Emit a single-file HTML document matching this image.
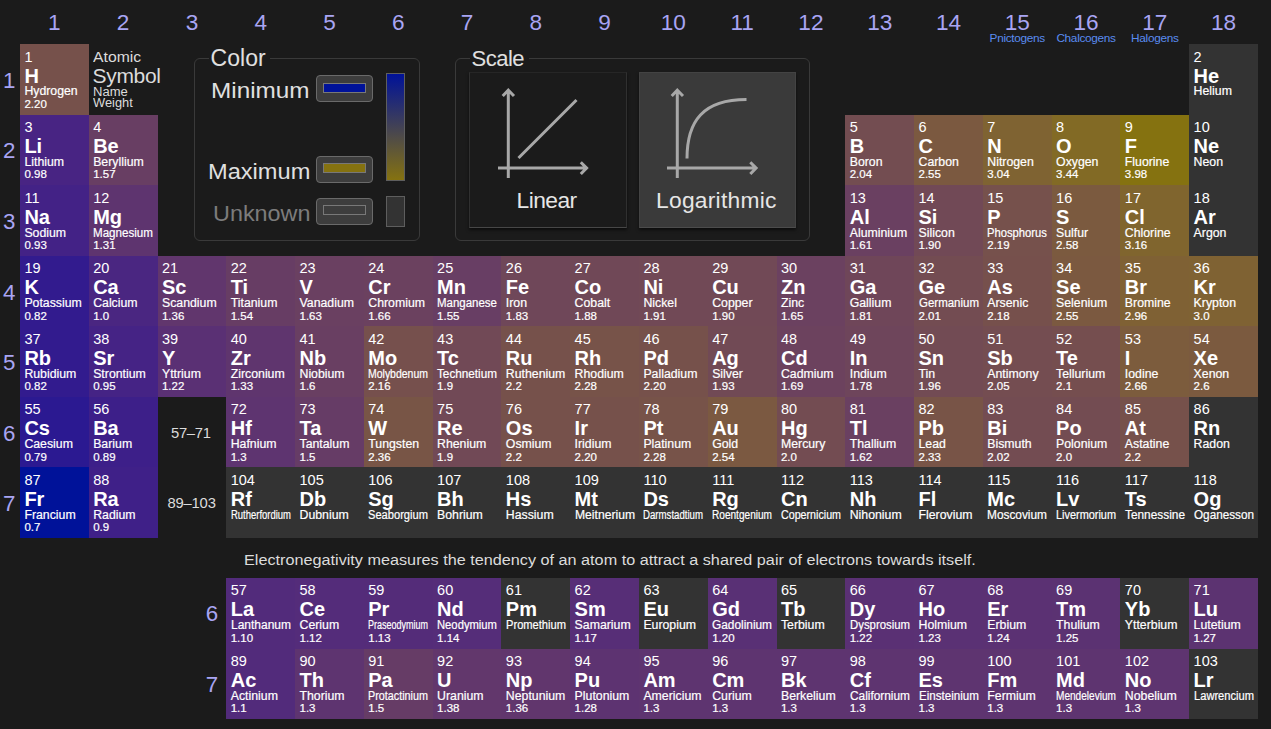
<!DOCTYPE html>
<html><head><meta charset="utf-8"><style>
*{margin:0;padding:0;box-sizing:border-box}
html,body{width:1271px;height:729px;overflow:hidden;background:#1b1b1b;font-family:"Liberation Sans",sans-serif;color:#fff}
.a{position:absolute;white-space:nowrap}
.c{position:absolute;overflow:hidden}
.n{position:absolute;left:5px;font-size:14.5px;line-height:14.5px}
.s{position:absolute;left:5px;font-size:20px;line-height:20px;font-weight:bold}
.m{position:absolute;left:5px;font-size:12.3px;line-height:12.3px;transform-origin:0 0;-webkit-text-stroke:0.2px #fff}
.w{position:absolute;left:5px;font-size:11.5px;line-height:11.5px;-webkit-text-stroke:0.2px #fff}
.gh{position:absolute;font-size:22.6px;line-height:22.6px;color:#a9a5f3;text-align:center}
.rh{position:absolute;font-size:22.3px;line-height:22.3px;color:#a9a5f3;text-align:center}
.gl{position:absolute;font-size:11.8px;line-height:11.8px;letter-spacing:-0.3px;color:#5a8cf0;text-align:center}
</style></head>
<body>
<div class="c" style="left:20px;top:44px;width:69px;height:71px;background:#76514b"><div class="n" style="left:4.40px;top:6px">1</div><div class="s" style="left:4.40px;top:22px">H</div><div class="m" style="left:4.40px;top:41px">Hydrogen</div><div class="w" style="left:4.40px;top:55px">2.20</div></div>
<div class="c" style="left:1189px;top:44px;width:69px;height:71px;background:#333333"><div class="n" style="left:4.62px;top:6px">2</div><div class="s" style="left:4.62px;top:22px">He</div><div class="m" style="left:4.62px;top:41px">Helium</div></div>
<div class="c" style="left:20px;top:115px;width:69px;height:70px;background:#482483"><div class="n" style="left:4.40px;top:5px">3</div><div class="s" style="left:4.40px;top:21px">Li</div><div class="m" style="left:4.40px;top:41px">Lithium</div><div class="w" style="left:4.40px;top:54px">0.98</div></div>
<div class="c" style="left:89px;top:115px;width:69px;height:70px;background:#683e63"><div class="n" style="left:4.18px;top:5px">4</div><div class="s" style="left:4.18px;top:21px">Be</div><div class="m" style="left:4.18px;top:41px">Beryllium</div><div class="w" style="left:4.18px;top:54px">1.57</div></div>
<div class="c" style="left:845px;top:115px;width:69px;height:70px;background:#734d51"><div class="n" style="left:4.73px;top:5px">5</div><div class="s" style="left:4.73px;top:21px">B</div><div class="m" style="left:4.73px;top:41px">Boron</div><div class="w" style="left:4.73px;top:54px">2.04</div></div>
<div class="c" style="left:914px;top:115px;width:69px;height:70px;background:#7b5940"><div class="n" style="left:4.51px;top:5px">6</div><div class="s" style="left:4.51px;top:21px">C</div><div class="m" style="left:4.51px;top:41px">Carbon</div><div class="w" style="left:4.51px;top:54px">2.55</div></div>
<div class="c" style="left:983px;top:115px;width:69px;height:70px;background:#7f6332"><div class="n" style="left:4.29px;top:5px">7</div><div class="s" style="left:4.29px;top:21px">N</div><div class="m" style="left:4.29px;top:41px">Nitrogen</div><div class="w" style="left:4.29px;top:54px">3.04</div></div>
<div class="c" style="left:1052px;top:115px;width:68px;height:70px;background:#826a25"><div class="n" style="left:4.07px;top:5px">8</div><div class="s" style="left:4.07px;top:21px">O</div><div class="m" style="left:4.07px;top:41px">Oxygen</div><div class="w" style="left:4.07px;top:54px">3.44</div></div>
<div class="c" style="left:1120px;top:115px;width:69px;height:70px;background:#857210"><div class="n" style="left:4.84px;top:5px">9</div><div class="s" style="left:4.84px;top:21px">F</div><div class="m" style="left:4.84px;top:41px">Fluorine</div><div class="w" style="left:4.84px;top:54px">3.98</div></div>
<div class="c" style="left:1189px;top:115px;width:69px;height:70px;background:#333333"><div class="n" style="left:4.62px;top:5px">10</div><div class="s" style="left:4.62px;top:21px">Ne</div><div class="m" style="left:4.62px;top:41px">Neon</div></div>
<div class="c" style="left:20px;top:185px;width:69px;height:71px;background:#432286"><div class="n" style="left:4.40px;top:6px">11</div><div class="s" style="left:4.40px;top:22px">Na</div><div class="m" style="left:4.40px;top:42px">Sodium</div><div class="w" style="left:4.40px;top:55px">0.93</div></div>
<div class="c" style="left:89px;top:185px;width:69px;height:71px;background:#5e346f"><div class="n" style="left:4.18px;top:6px">12</div><div class="s" style="left:4.18px;top:22px">Mg</div><div class="m" style="left:4.18px;top:42px;transform:scaleX(0.9437)">Magnesium</div><div class="w" style="left:4.18px;top:55px">1.31</div></div>
<div class="c" style="left:845px;top:185px;width:69px;height:71px;background:#6a4061"><div class="n" style="left:4.73px;top:6px">13</div><div class="s" style="left:4.73px;top:22px">Al</div><div class="m" style="left:4.73px;top:42px">Aluminium</div><div class="w" style="left:4.73px;top:55px">1.61</div></div>
<div class="c" style="left:914px;top:185px;width:69px;height:71px;background:#714956"><div class="n" style="left:4.51px;top:6px">14</div><div class="s" style="left:4.51px;top:22px">Si</div><div class="m" style="left:4.51px;top:42px">Silicon</div><div class="w" style="left:4.51px;top:55px">1.90</div></div>
<div class="c" style="left:983px;top:185px;width:69px;height:71px;background:#76514c"><div class="n" style="left:4.29px;top:6px">15</div><div class="s" style="left:4.29px;top:22px">P</div><div class="m" style="left:4.29px;top:42px;transform:scaleX(0.9140)">Phosphorus</div><div class="w" style="left:4.29px;top:55px">2.19</div></div>
<div class="c" style="left:1052px;top:185px;width:68px;height:71px;background:#7b5a3f"><div class="n" style="left:4.07px;top:6px">16</div><div class="s" style="left:4.07px;top:22px">S</div><div class="m" style="left:4.07px;top:42px">Sulfur</div><div class="w" style="left:4.07px;top:55px">2.58</div></div>
<div class="c" style="left:1120px;top:185px;width:69px;height:71px;background:#80652e"><div class="n" style="left:4.84px;top:6px">17</div><div class="s" style="left:4.84px;top:22px">Cl</div><div class="m" style="left:4.84px;top:42px">Chlorine</div><div class="w" style="left:4.84px;top:55px">3.16</div></div>
<div class="c" style="left:1189px;top:185px;width:69px;height:71px;background:#333333"><div class="n" style="left:4.62px;top:6px">18</div><div class="s" style="left:4.62px;top:22px">Ar</div><div class="m" style="left:4.62px;top:42px">Argon</div></div>
<div class="c" style="left:20px;top:256px;width:69px;height:70px;background:#321b8e"><div class="n" style="left:4.40px;top:5px">19</div><div class="s" style="left:4.40px;top:21px">K</div><div class="m" style="left:4.40px;top:41px">Potassium</div><div class="w" style="left:4.40px;top:55px">0.82</div></div>
<div class="c" style="left:89px;top:256px;width:69px;height:70px;background:#4a2681"><div class="n" style="left:4.18px;top:5px">20</div><div class="s" style="left:4.18px;top:21px">Ca</div><div class="m" style="left:4.18px;top:41px">Calcium</div><div class="w" style="left:4.18px;top:55px">1.0</div></div>
<div class="c" style="left:158px;top:256px;width:68px;height:70px;background:#61366d"><div class="n" style="left:3.96px;top:5px">21</div><div class="s" style="left:3.96px;top:21px">Sc</div><div class="m" style="left:3.96px;top:41px">Scandium</div><div class="w" style="left:3.96px;top:55px">1.36</div></div>
<div class="c" style="left:226px;top:256px;width:69px;height:70px;background:#673d64"><div class="n" style="left:4.73px;top:5px">22</div><div class="s" style="left:4.73px;top:21px">Ti</div><div class="m" style="left:4.73px;top:41px">Titanium</div><div class="w" style="left:4.73px;top:55px">1.54</div></div>
<div class="c" style="left:295px;top:256px;width:69px;height:70px;background:#6a4061"><div class="n" style="left:4.51px;top:5px">23</div><div class="s" style="left:4.51px;top:21px">V</div><div class="m" style="left:4.51px;top:41px">Vanadium</div><div class="w" style="left:4.51px;top:55px">1.63</div></div>
<div class="c" style="left:364px;top:256px;width:69px;height:70px;background:#6b415f"><div class="n" style="left:4.29px;top:5px">24</div><div class="s" style="left:4.29px;top:21px">Cr</div><div class="m" style="left:4.29px;top:41px">Chromium</div><div class="w" style="left:4.29px;top:55px">1.66</div></div>
<div class="c" style="left:433px;top:256px;width:68px;height:70px;background:#683e64"><div class="n" style="left:4.07px;top:5px">25</div><div class="s" style="left:4.07px;top:21px">Mn</div><div class="m" style="left:4.07px;top:41px;transform:scaleX(0.9334)">Manganese</div><div class="w" style="left:4.07px;top:55px">1.55</div></div>
<div class="c" style="left:501px;top:256px;width:69px;height:70px;background:#6f4759"><div class="n" style="left:4.84px;top:5px">26</div><div class="s" style="left:4.84px;top:21px">Fe</div><div class="m" style="left:4.84px;top:41px">Iron</div><div class="w" style="left:4.84px;top:55px">1.83</div></div>
<div class="c" style="left:570px;top:256px;width:69px;height:70px;background:#704857"><div class="n" style="left:4.62px;top:5px">27</div><div class="s" style="left:4.62px;top:21px">Co</div><div class="m" style="left:4.62px;top:41px">Cobalt</div><div class="w" style="left:4.62px;top:55px">1.88</div></div>
<div class="c" style="left:639px;top:256px;width:69px;height:70px;background:#714956"><div class="n" style="left:4.40px;top:5px">28</div><div class="s" style="left:4.40px;top:21px">Ni</div><div class="m" style="left:4.40px;top:41px">Nickel</div><div class="w" style="left:4.40px;top:55px">1.91</div></div>
<div class="c" style="left:708px;top:256px;width:69px;height:70px;background:#714956"><div class="n" style="left:4.18px;top:5px">29</div><div class="s" style="left:4.18px;top:21px">Cu</div><div class="m" style="left:4.18px;top:41px">Copper</div><div class="w" style="left:4.18px;top:55px">1.90</div></div>
<div class="c" style="left:777px;top:256px;width:68px;height:70px;background:#6b4160"><div class="n" style="left:3.96px;top:5px">30</div><div class="s" style="left:3.96px;top:21px">Zn</div><div class="m" style="left:3.96px;top:41px">Zinc</div><div class="w" style="left:3.96px;top:55px">1.65</div></div>
<div class="c" style="left:845px;top:256px;width:69px;height:70px;background:#6f4659"><div class="n" style="left:4.73px;top:5px">31</div><div class="s" style="left:4.73px;top:21px">Ga</div><div class="m" style="left:4.73px;top:41px">Gallium</div><div class="w" style="left:4.73px;top:55px">1.81</div></div>
<div class="c" style="left:914px;top:256px;width:69px;height:70px;background:#734c52"><div class="n" style="left:4.51px;top:5px">32</div><div class="s" style="left:4.51px;top:21px">Ge</div><div class="m" style="left:4.51px;top:41px;transform:scaleX(0.9338)">Germanium</div><div class="w" style="left:4.51px;top:55px">2.01</div></div>
<div class="c" style="left:983px;top:256px;width:69px;height:70px;background:#76504c"><div class="n" style="left:4.29px;top:5px">33</div><div class="s" style="left:4.29px;top:21px">As</div><div class="m" style="left:4.29px;top:41px">Arsenic</div><div class="w" style="left:4.29px;top:55px">2.18</div></div>
<div class="c" style="left:1052px;top:256px;width:68px;height:70px;background:#7b5940"><div class="n" style="left:4.07px;top:5px">34</div><div class="s" style="left:4.07px;top:21px">Se</div><div class="m" style="left:4.07px;top:41px">Selenium</div><div class="w" style="left:4.07px;top:55px">2.55</div></div>
<div class="c" style="left:1120px;top:256px;width:69px;height:70px;background:#7f6134"><div class="n" style="left:4.84px;top:5px">35</div><div class="s" style="left:4.84px;top:21px">Br</div><div class="m" style="left:4.84px;top:41px">Bromine</div><div class="w" style="left:4.84px;top:55px">2.96</div></div>
<div class="c" style="left:1189px;top:256px;width:69px;height:70px;background:#7f6233"><div class="n" style="left:4.62px;top:5px">36</div><div class="s" style="left:4.62px;top:21px">Kr</div><div class="m" style="left:4.62px;top:41px">Krypton</div><div class="w" style="left:4.62px;top:55px">3.0</div></div>
<div class="c" style="left:20px;top:326px;width:69px;height:71px;background:#321b8e"><div class="n" style="left:4.40px;top:6px">37</div><div class="s" style="left:4.40px;top:22px">Rb</div><div class="m" style="left:4.40px;top:42px">Rubidium</div><div class="w" style="left:4.40px;top:55px">0.82</div></div>
<div class="c" style="left:89px;top:326px;width:69px;height:71px;background:#452385"><div class="n" style="left:4.18px;top:6px">38</div><div class="s" style="left:4.18px;top:22px">Sr</div><div class="m" style="left:4.18px;top:42px">Strontium</div><div class="w" style="left:4.18px;top:55px">0.95</div></div>
<div class="c" style="left:158px;top:326px;width:68px;height:71px;background:#5a3074"><div class="n" style="left:3.96px;top:6px">39</div><div class="s" style="left:3.96px;top:22px">Y</div><div class="m" style="left:3.96px;top:42px">Yttrium</div><div class="w" style="left:3.96px;top:55px">1.22</div></div>
<div class="c" style="left:226px;top:326px;width:69px;height:71px;background:#5f356e"><div class="n" style="left:4.73px;top:6px">40</div><div class="s" style="left:4.73px;top:22px">Zr</div><div class="m" style="left:4.73px;top:42px">Zirconium</div><div class="w" style="left:4.73px;top:55px">1.33</div></div>
<div class="c" style="left:295px;top:326px;width:69px;height:71px;background:#693f62"><div class="n" style="left:4.51px;top:6px">41</div><div class="s" style="left:4.51px;top:22px">Nb</div><div class="m" style="left:4.51px;top:42px">Niobium</div><div class="w" style="left:4.51px;top:55px">1.6</div></div>
<div class="c" style="left:364px;top:326px;width:69px;height:71px;background:#76504d"><div class="n" style="left:4.29px;top:6px">42</div><div class="s" style="left:4.29px;top:22px">Mo</div><div class="m" style="left:4.29px;top:42px;transform:scaleX(0.8520)">Molybdenum</div><div class="w" style="left:4.29px;top:55px">2.16</div></div>
<div class="c" style="left:433px;top:326px;width:68px;height:71px;background:#714956"><div class="n" style="left:4.07px;top:6px">43</div><div class="s" style="left:4.07px;top:22px">Tc</div><div class="m" style="left:4.07px;top:42px;transform:scaleX(0.9539)">Technetium</div><div class="w" style="left:4.07px;top:55px">1.9</div></div>
<div class="c" style="left:501px;top:326px;width:69px;height:71px;background:#76514b"><div class="n" style="left:4.84px;top:6px">44</div><div class="s" style="left:4.84px;top:22px">Ru</div><div class="m" style="left:4.84px;top:42px">Ruthenium</div><div class="w" style="left:4.84px;top:55px">2.2</div></div>
<div class="c" style="left:570px;top:326px;width:69px;height:71px;background:#775349"><div class="n" style="left:4.62px;top:6px">45</div><div class="s" style="left:4.62px;top:22px">Rh</div><div class="m" style="left:4.62px;top:42px">Rhodium</div><div class="w" style="left:4.62px;top:55px">2.28</div></div>
<div class="c" style="left:639px;top:326px;width:69px;height:71px;background:#76514b"><div class="n" style="left:4.40px;top:6px">46</div><div class="s" style="left:4.40px;top:22px">Pd</div><div class="m" style="left:4.40px;top:42px">Palladium</div><div class="w" style="left:4.40px;top:55px">2.20</div></div>
<div class="c" style="left:708px;top:326px;width:69px;height:71px;background:#714a55"><div class="n" style="left:4.18px;top:6px">47</div><div class="s" style="left:4.18px;top:22px">Ag</div><div class="m" style="left:4.18px;top:42px">Silver</div><div class="w" style="left:4.18px;top:55px">1.93</div></div>
<div class="c" style="left:777px;top:326px;width:68px;height:71px;background:#6c425e"><div class="n" style="left:3.96px;top:6px">48</div><div class="s" style="left:3.96px;top:22px">Cd</div><div class="m" style="left:3.96px;top:42px">Cadmium</div><div class="w" style="left:3.96px;top:55px">1.69</div></div>
<div class="c" style="left:845px;top:326px;width:69px;height:71px;background:#6e455b"><div class="n" style="left:4.73px;top:6px">49</div><div class="s" style="left:4.73px;top:22px">In</div><div class="m" style="left:4.73px;top:42px">Indium</div><div class="w" style="left:4.73px;top:55px">1.78</div></div>
<div class="c" style="left:914px;top:326px;width:69px;height:71px;background:#724b54"><div class="n" style="left:4.51px;top:6px">50</div><div class="s" style="left:4.51px;top:22px">Sn</div><div class="m" style="left:4.51px;top:42px">Tin</div><div class="w" style="left:4.51px;top:55px">1.96</div></div>
<div class="c" style="left:983px;top:326px;width:69px;height:71px;background:#744d51"><div class="n" style="left:4.29px;top:6px">51</div><div class="s" style="left:4.29px;top:22px">Sb</div><div class="m" style="left:4.29px;top:42px">Antimony</div><div class="w" style="left:4.29px;top:55px">2.05</div></div>
<div class="c" style="left:1052px;top:326px;width:68px;height:71px;background:#754e4f"><div class="n" style="left:4.07px;top:6px">52</div><div class="s" style="left:4.07px;top:22px">Te</div><div class="m" style="left:4.07px;top:42px">Tellurium</div><div class="w" style="left:4.07px;top:55px">2.1</div></div>
<div class="c" style="left:1120px;top:326px;width:69px;height:71px;background:#7c5c3d"><div class="n" style="left:4.84px;top:6px">53</div><div class="s" style="left:4.84px;top:22px">I</div><div class="m" style="left:4.84px;top:42px">Iodine</div><div class="w" style="left:4.84px;top:55px">2.66</div></div>
<div class="c" style="left:1189px;top:326px;width:69px;height:71px;background:#7b5a3f"><div class="n" style="left:4.62px;top:6px">54</div><div class="s" style="left:4.62px;top:22px">Xe</div><div class="m" style="left:4.62px;top:42px">Xenon</div><div class="w" style="left:4.62px;top:55px">2.6</div></div>
<div class="c" style="left:20px;top:397px;width:69px;height:70px;background:#2b1991"><div class="n" style="left:4.40px;top:5px">55</div><div class="s" style="left:4.40px;top:21px">Cs</div><div class="m" style="left:4.40px;top:41px">Caesium</div><div class="w" style="left:4.40px;top:55px">0.79</div></div>
<div class="c" style="left:89px;top:397px;width:69px;height:70px;background:#3d1f89"><div class="n" style="left:4.18px;top:5px">56</div><div class="s" style="left:4.18px;top:21px">Ba</div><div class="m" style="left:4.18px;top:41px">Barium</div><div class="w" style="left:4.18px;top:55px">0.89</div></div>
<div class="c" style="left:226px;top:397px;width:69px;height:70px;background:#5e3470"><div class="n" style="left:4.73px;top:5px">72</div><div class="s" style="left:4.73px;top:21px">Hf</div><div class="m" style="left:4.73px;top:41px">Hafnium</div><div class="w" style="left:4.73px;top:55px">1.3</div></div>
<div class="c" style="left:295px;top:397px;width:69px;height:70px;background:#663c66"><div class="n" style="left:4.51px;top:5px">73</div><div class="s" style="left:4.51px;top:21px">Ta</div><div class="m" style="left:4.51px;top:41px">Tantalum</div><div class="w" style="left:4.51px;top:55px">1.5</div></div>
<div class="c" style="left:364px;top:397px;width:69px;height:70px;background:#785546"><div class="n" style="left:4.29px;top:5px">74</div><div class="s" style="left:4.29px;top:21px">W</div><div class="m" style="left:4.29px;top:41px">Tungsten</div><div class="w" style="left:4.29px;top:55px">2.36</div></div>
<div class="c" style="left:433px;top:397px;width:68px;height:70px;background:#714956"><div class="n" style="left:4.07px;top:5px">75</div><div class="s" style="left:4.07px;top:21px">Re</div><div class="m" style="left:4.07px;top:41px">Rhenium</div><div class="w" style="left:4.07px;top:55px">1.9</div></div>
<div class="c" style="left:501px;top:397px;width:69px;height:70px;background:#76514b"><div class="n" style="left:4.84px;top:5px">76</div><div class="s" style="left:4.84px;top:21px">Os</div><div class="m" style="left:4.84px;top:41px">Osmium</div><div class="w" style="left:4.84px;top:55px">2.2</div></div>
<div class="c" style="left:570px;top:397px;width:69px;height:70px;background:#76514b"><div class="n" style="left:4.62px;top:5px">77</div><div class="s" style="left:4.62px;top:21px">Ir</div><div class="m" style="left:4.62px;top:41px">Iridium</div><div class="w" style="left:4.62px;top:55px">2.20</div></div>
<div class="c" style="left:639px;top:397px;width:69px;height:70px;background:#775349"><div class="n" style="left:4.40px;top:5px">78</div><div class="s" style="left:4.40px;top:21px">Pt</div><div class="m" style="left:4.40px;top:41px">Platinum</div><div class="w" style="left:4.40px;top:55px">2.28</div></div>
<div class="c" style="left:708px;top:397px;width:69px;height:70px;background:#7b5941"><div class="n" style="left:4.18px;top:5px">79</div><div class="s" style="left:4.18px;top:21px">Au</div><div class="m" style="left:4.18px;top:41px">Gold</div><div class="w" style="left:4.18px;top:55px">2.54</div></div>
<div class="c" style="left:777px;top:397px;width:68px;height:70px;background:#734c52"><div class="n" style="left:3.96px;top:5px">80</div><div class="s" style="left:3.96px;top:21px">Hg</div><div class="m" style="left:3.96px;top:41px">Mercury</div><div class="w" style="left:3.96px;top:55px">2.0</div></div>
<div class="c" style="left:845px;top:397px;width:69px;height:70px;background:#6a4061"><div class="n" style="left:4.73px;top:5px">81</div><div class="s" style="left:4.73px;top:21px">Tl</div><div class="m" style="left:4.73px;top:41px">Thallium</div><div class="w" style="left:4.73px;top:55px">1.62</div></div>
<div class="c" style="left:914px;top:397px;width:69px;height:70px;background:#785447"><div class="n" style="left:4.51px;top:5px">82</div><div class="s" style="left:4.51px;top:21px">Pb</div><div class="m" style="left:4.51px;top:41px">Lead</div><div class="w" style="left:4.51px;top:55px">2.33</div></div>
<div class="c" style="left:983px;top:397px;width:69px;height:70px;background:#734c52"><div class="n" style="left:4.29px;top:5px">83</div><div class="s" style="left:4.29px;top:21px">Bi</div><div class="m" style="left:4.29px;top:41px">Bismuth</div><div class="w" style="left:4.29px;top:55px">2.02</div></div>
<div class="c" style="left:1052px;top:397px;width:68px;height:70px;background:#734c52"><div class="n" style="left:4.07px;top:5px">84</div><div class="s" style="left:4.07px;top:21px">Po</div><div class="m" style="left:4.07px;top:41px">Polonium</div><div class="w" style="left:4.07px;top:55px">2.0</div></div>
<div class="c" style="left:1120px;top:397px;width:69px;height:70px;background:#76514b"><div class="n" style="left:4.84px;top:5px">85</div><div class="s" style="left:4.84px;top:21px">At</div><div class="m" style="left:4.84px;top:41px">Astatine</div><div class="w" style="left:4.84px;top:55px">2.2</div></div>
<div class="c" style="left:1189px;top:397px;width:69px;height:70px;background:#333333"><div class="n" style="left:4.62px;top:5px">86</div><div class="s" style="left:4.62px;top:21px">Rn</div><div class="m" style="left:4.62px;top:41px">Radon</div></div>
<div class="c" style="left:20px;top:467px;width:69px;height:71px;background:#001299"><div class="n" style="left:4.40px;top:6px">87</div><div class="s" style="left:4.40px;top:22px">Fr</div><div class="m" style="left:4.40px;top:42px">Francium</div><div class="w" style="left:4.40px;top:55px">0.7</div></div>
<div class="c" style="left:89px;top:467px;width:69px;height:71px;background:#3f2088"><div class="n" style="left:4.18px;top:6px">88</div><div class="s" style="left:4.18px;top:22px">Ra</div><div class="m" style="left:4.18px;top:42px">Radium</div><div class="w" style="left:4.18px;top:55px">0.9</div></div>
<div class="c" style="left:226px;top:467px;width:69px;height:71px;background:#333333"><div class="n" style="left:4.73px;top:6px">104</div><div class="s" style="left:4.73px;top:22px">Rf</div><div class="m" style="left:4.73px;top:42px;transform:scaleX(0.7699)">Rutherfordium</div></div>
<div class="c" style="left:295px;top:467px;width:69px;height:71px;background:#333333"><div class="n" style="left:4.51px;top:6px">105</div><div class="s" style="left:4.51px;top:22px">Db</div><div class="m" style="left:4.51px;top:42px">Dubnium</div></div>
<div class="c" style="left:364px;top:467px;width:69px;height:71px;background:#333333"><div class="n" style="left:4.29px;top:6px">106</div><div class="s" style="left:4.29px;top:22px">Sg</div><div class="m" style="left:4.29px;top:42px;transform:scaleX(0.9047)">Seaborgium</div></div>
<div class="c" style="left:433px;top:467px;width:68px;height:71px;background:#333333"><div class="n" style="left:4.07px;top:6px">107</div><div class="s" style="left:4.07px;top:22px">Bh</div><div class="m" style="left:4.07px;top:42px">Bohrium</div></div>
<div class="c" style="left:501px;top:467px;width:69px;height:71px;background:#333333"><div class="n" style="left:4.84px;top:6px">108</div><div class="s" style="left:4.84px;top:22px">Hs</div><div class="m" style="left:4.84px;top:42px">Hassium</div></div>
<div class="c" style="left:570px;top:467px;width:69px;height:71px;background:#333333"><div class="n" style="left:4.62px;top:6px">109</div><div class="s" style="left:4.62px;top:22px">Mt</div><div class="m" style="left:4.62px;top:42px;transform:scaleX(0.9863)">Meitnerium</div></div>
<div class="c" style="left:639px;top:467px;width:69px;height:71px;background:#333333"><div class="n" style="left:4.40px;top:6px">110</div><div class="s" style="left:4.40px;top:22px">Ds</div><div class="m" style="left:4.40px;top:42px;transform:scaleX(0.7838)">Darmstadtium</div></div>
<div class="c" style="left:708px;top:467px;width:69px;height:71px;background:#333333"><div class="n" style="left:4.18px;top:6px">111</div><div class="s" style="left:4.18px;top:22px">Rg</div><div class="m" style="left:4.18px;top:42px;transform:scaleX(0.8201)">Roentgenium</div></div>
<div class="c" style="left:777px;top:467px;width:68px;height:71px;background:#333333"><div class="n" style="left:3.96px;top:6px">112</div><div class="s" style="left:3.96px;top:22px">Cn</div><div class="m" style="left:3.96px;top:42px;transform:scaleX(0.8690)">Copernicium</div></div>
<div class="c" style="left:845px;top:467px;width:69px;height:71px;background:#333333"><div class="n" style="left:4.73px;top:6px">113</div><div class="s" style="left:4.73px;top:22px">Nh</div><div class="m" style="left:4.73px;top:42px">Nihonium</div></div>
<div class="c" style="left:914px;top:467px;width:69px;height:71px;background:#333333"><div class="n" style="left:4.51px;top:6px">114</div><div class="s" style="left:4.51px;top:22px">Fl</div><div class="m" style="left:4.51px;top:42px">Flerovium</div></div>
<div class="c" style="left:983px;top:467px;width:69px;height:71px;background:#333333"><div class="n" style="left:4.29px;top:6px">115</div><div class="s" style="left:4.29px;top:22px">Mc</div><div class="m" style="left:4.29px;top:42px;transform:scaleX(0.9647)">Moscovium</div></div>
<div class="c" style="left:1052px;top:467px;width:68px;height:71px;background:#333333"><div class="n" style="left:4.07px;top:6px">116</div><div class="s" style="left:4.07px;top:22px">Lv</div><div class="m" style="left:4.07px;top:42px;transform:scaleX(0.8868)">Livermorium</div></div>
<div class="c" style="left:1120px;top:467px;width:69px;height:71px;background:#333333"><div class="n" style="left:4.84px;top:6px">117</div><div class="s" style="left:4.84px;top:22px">Ts</div><div class="m" style="left:4.84px;top:42px;transform:scaleX(0.9642)">Tennessine</div></div>
<div class="c" style="left:1189px;top:467px;width:69px;height:71px;background:#333333"><div class="n" style="left:4.62px;top:6px">118</div><div class="s" style="left:4.62px;top:22px">Og</div><div class="m" style="left:4.62px;top:42px;transform:scaleX(0.9537)">Oganesson</div></div>
<div class="c" style="left:226px;top:578px;width:69px;height:71px;background:#522b7b"><div class="n" style="left:4.73px;top:5px">57</div><div class="s" style="left:4.73px;top:21px">La</div><div class="m" style="left:4.73px;top:41px;transform:scaleX(0.9748)">Lanthanum</div><div class="w" style="left:4.73px;top:55px">1.10</div></div>
<div class="c" style="left:295px;top:578px;width:69px;height:71px;background:#542c7a"><div class="n" style="left:4.51px;top:5px">58</div><div class="s" style="left:4.51px;top:21px">Ce</div><div class="m" style="left:4.51px;top:41px">Cerium</div><div class="w" style="left:4.51px;top:55px">1.12</div></div>
<div class="c" style="left:364px;top:578px;width:69px;height:71px;background:#542c79"><div class="n" style="left:4.29px;top:5px">59</div><div class="s" style="left:4.29px;top:21px">Pr</div><div class="m" style="left:4.29px;top:41px;transform:scaleX(0.7315)">Praseodymium</div><div class="w" style="left:4.29px;top:55px">1.13</div></div>
<div class="c" style="left:433px;top:578px;width:68px;height:71px;background:#552d79"><div class="n" style="left:4.07px;top:5px">60</div><div class="s" style="left:4.07px;top:21px">Nd</div><div class="m" style="left:4.07px;top:41px;transform:scaleX(0.9144)">Neodymium</div><div class="w" style="left:4.07px;top:55px">1.14</div></div>
<div class="c" style="left:501px;top:578px;width:69px;height:71px;background:#333333"><div class="n" style="left:4.84px;top:5px">61</div><div class="s" style="left:4.84px;top:21px">Pm</div><div class="m" style="left:4.84px;top:41px;transform:scaleX(0.9049)">Promethium</div></div>
<div class="c" style="left:570px;top:578px;width:69px;height:71px;background:#572e77"><div class="n" style="left:4.62px;top:5px">62</div><div class="s" style="left:4.62px;top:21px">Sm</div><div class="m" style="left:4.62px;top:41px">Samarium</div><div class="w" style="left:4.62px;top:55px">1.17</div></div>
<div class="c" style="left:639px;top:578px;width:69px;height:71px;background:#333333"><div class="n" style="left:4.40px;top:5px">63</div><div class="s" style="left:4.40px;top:21px">Eu</div><div class="m" style="left:4.40px;top:41px">Europium</div></div>
<div class="c" style="left:708px;top:578px;width:69px;height:71px;background:#593075"><div class="n" style="left:4.18px;top:5px">64</div><div class="s" style="left:4.18px;top:21px">Gd</div><div class="m" style="left:4.18px;top:41px;transform:scaleX(0.9644)">Gadolinium</div><div class="w" style="left:4.18px;top:55px">1.20</div></div>
<div class="c" style="left:777px;top:578px;width:68px;height:71px;background:#333333"><div class="n" style="left:3.96px;top:5px">65</div><div class="s" style="left:3.96px;top:21px">Tb</div><div class="m" style="left:3.96px;top:41px">Terbium</div></div>
<div class="c" style="left:845px;top:578px;width:69px;height:71px;background:#5a3074"><div class="n" style="left:4.73px;top:5px">66</div><div class="s" style="left:4.73px;top:21px">Dy</div><div class="m" style="left:4.73px;top:41px;transform:scaleX(0.9241)">Dysprosium</div><div class="w" style="left:4.73px;top:55px">1.22</div></div>
<div class="c" style="left:914px;top:578px;width:69px;height:71px;background:#5a3174"><div class="n" style="left:4.51px;top:5px">67</div><div class="s" style="left:4.51px;top:21px">Ho</div><div class="m" style="left:4.51px;top:41px">Holmium</div><div class="w" style="left:4.51px;top:55px">1.23</div></div>
<div class="c" style="left:983px;top:578px;width:69px;height:71px;background:#5b3173"><div class="n" style="left:4.29px;top:5px">68</div><div class="s" style="left:4.29px;top:21px">Er</div><div class="m" style="left:4.29px;top:41px">Erbium</div><div class="w" style="left:4.29px;top:55px">1.24</div></div>
<div class="c" style="left:1052px;top:578px;width:68px;height:71px;background:#5b3272"><div class="n" style="left:4.07px;top:5px">69</div><div class="s" style="left:4.07px;top:21px">Tm</div><div class="m" style="left:4.07px;top:41px">Thulium</div><div class="w" style="left:4.07px;top:55px">1.25</div></div>
<div class="c" style="left:1120px;top:578px;width:69px;height:71px;background:#333333"><div class="n" style="left:4.84px;top:5px">70</div><div class="s" style="left:4.84px;top:21px">Yb</div><div class="m" style="left:4.84px;top:41px">Ytterbium</div></div>
<div class="c" style="left:1189px;top:578px;width:69px;height:71px;background:#5c3371"><div class="n" style="left:4.62px;top:5px">71</div><div class="s" style="left:4.62px;top:21px">Lu</div><div class="m" style="left:4.62px;top:41px">Lutetium</div><div class="w" style="left:4.62px;top:55px">1.27</div></div>
<div class="c" style="left:226px;top:649px;width:69px;height:70px;background:#522b7b"><div class="n" style="left:4.73px;top:5px">89</div><div class="s" style="left:4.73px;top:21px">Ac</div><div class="m" style="left:4.73px;top:41px">Actinium</div><div class="w" style="left:4.73px;top:54px">1.1</div></div>
<div class="c" style="left:295px;top:649px;width:69px;height:70px;background:#5e3470"><div class="n" style="left:4.51px;top:5px">90</div><div class="s" style="left:4.51px;top:21px">Th</div><div class="m" style="left:4.51px;top:41px">Thorium</div><div class="w" style="left:4.51px;top:54px">1.3</div></div>
<div class="c" style="left:364px;top:649px;width:69px;height:70px;background:#663c66"><div class="n" style="left:4.29px;top:5px">91</div><div class="s" style="left:4.29px;top:21px">Pa</div><div class="m" style="left:4.29px;top:41px;transform:scaleX(0.8777)">Protactinium</div><div class="w" style="left:4.29px;top:54px">1.5</div></div>
<div class="c" style="left:433px;top:649px;width:68px;height:70px;background:#62376c"><div class="n" style="left:4.07px;top:5px">92</div><div class="s" style="left:4.07px;top:21px">U</div><div class="m" style="left:4.07px;top:41px">Uranium</div><div class="w" style="left:4.07px;top:54px">1.38</div></div>
<div class="c" style="left:501px;top:649px;width:69px;height:70px;background:#61366d"><div class="n" style="left:4.84px;top:5px">93</div><div class="s" style="left:4.84px;top:21px">Np</div><div class="m" style="left:4.84px;top:41px">Neptunium</div><div class="w" style="left:4.84px;top:54px">1.36</div></div>
<div class="c" style="left:570px;top:649px;width:69px;height:70px;background:#5d3371"><div class="n" style="left:4.62px;top:5px">94</div><div class="s" style="left:4.62px;top:21px">Pu</div><div class="m" style="left:4.62px;top:41px">Plutonium</div><div class="w" style="left:4.62px;top:54px">1.28</div></div>
<div class="c" style="left:639px;top:649px;width:69px;height:70px;background:#5e3470"><div class="n" style="left:4.40px;top:5px">95</div><div class="s" style="left:4.40px;top:21px">Am</div><div class="m" style="left:4.40px;top:41px">Americium</div><div class="w" style="left:4.40px;top:54px">1.3</div></div>
<div class="c" style="left:708px;top:649px;width:69px;height:70px;background:#5e3470"><div class="n" style="left:4.18px;top:5px">96</div><div class="s" style="left:4.18px;top:21px">Cm</div><div class="m" style="left:4.18px;top:41px">Curium</div><div class="w" style="left:4.18px;top:54px">1.3</div></div>
<div class="c" style="left:777px;top:649px;width:68px;height:70px;background:#5e3470"><div class="n" style="left:3.96px;top:5px">97</div><div class="s" style="left:3.96px;top:21px">Bk</div><div class="m" style="left:3.96px;top:41px">Berkelium</div><div class="w" style="left:3.96px;top:54px">1.3</div></div>
<div class="c" style="left:845px;top:649px;width:69px;height:70px;background:#5e3470"><div class="n" style="left:4.73px;top:5px">98</div><div class="s" style="left:4.73px;top:21px">Cf</div><div class="m" style="left:4.73px;top:41px;transform:scaleX(0.9646)">Californium</div><div class="w" style="left:4.73px;top:54px">1.3</div></div>
<div class="c" style="left:914px;top:649px;width:69px;height:70px;background:#5e3470"><div class="n" style="left:4.51px;top:5px">99</div><div class="s" style="left:4.51px;top:21px">Es</div><div class="m" style="left:4.51px;top:41px;transform:scaleX(0.9437)">Einsteinium</div><div class="w" style="left:4.51px;top:54px">1.3</div></div>
<div class="c" style="left:983px;top:649px;width:69px;height:70px;background:#5e3470"><div class="n" style="left:4.29px;top:5px">100</div><div class="s" style="left:4.29px;top:21px">Fm</div><div class="m" style="left:4.29px;top:41px">Fermium</div><div class="w" style="left:4.29px;top:54px">1.3</div></div>
<div class="c" style="left:1052px;top:649px;width:68px;height:70px;background:#5e3470"><div class="n" style="left:4.07px;top:5px">101</div><div class="s" style="left:4.07px;top:21px">Md</div><div class="m" style="left:4.07px;top:41px;transform:scaleX(0.8202)">Mendelevium</div><div class="w" style="left:4.07px;top:54px">1.3</div></div>
<div class="c" style="left:1120px;top:649px;width:69px;height:70px;background:#5e3470"><div class="n" style="left:4.84px;top:5px">102</div><div class="s" style="left:4.84px;top:21px">No</div><div class="m" style="left:4.84px;top:41px">Nobelium</div><div class="w" style="left:4.84px;top:54px">1.3</div></div>
<div class="c" style="left:1189px;top:649px;width:69px;height:70px;background:#333333"><div class="n" style="left:4.62px;top:5px">103</div><div class="s" style="left:4.62px;top:21px">Lr</div><div class="m" style="left:4.62px;top:41px;transform:scaleX(0.9048)">Lawrencium</div></div>
<div class="gh" style="left:24.39px;width:60px;top:11.77px">1</div>
<div class="gh" style="left:93.17px;width:60px;top:11.77px">2</div>
<div class="gh" style="left:161.94px;width:60px;top:11.77px">3</div>
<div class="gh" style="left:230.72px;width:60px;top:11.77px">4</div>
<div class="gh" style="left:299.50px;width:60px;top:11.77px">5</div>
<div class="gh" style="left:368.28px;width:60px;top:11.77px">6</div>
<div class="gh" style="left:437.06px;width:60px;top:11.77px">7</div>
<div class="gh" style="left:505.83px;width:60px;top:11.77px">8</div>
<div class="gh" style="left:574.61px;width:60px;top:11.77px">9</div>
<div class="gh" style="left:643.39px;width:60px;top:11.77px">10</div>
<div class="gh" style="left:712.17px;width:60px;top:11.77px">11</div>
<div class="gh" style="left:780.94px;width:60px;top:11.77px">12</div>
<div class="gh" style="left:849.72px;width:60px;top:11.77px">13</div>
<div class="gh" style="left:918.50px;width:60px;top:11.77px">14</div>
<div class="gh" style="left:987.28px;width:60px;top:11.77px">15</div>
<div class="gh" style="left:1056.06px;width:60px;top:11.77px">16</div>
<div class="gh" style="left:1124.83px;width:60px;top:11.77px">17</div>
<div class="gh" style="left:1193.61px;width:60px;top:11.77px">18</div>
<div class="gl" style="left:977.28px;width:80px;top:33.31px">Pnictogens</div>
<div class="gl" style="left:1046.06px;width:80px;top:33.31px">Chalcogens</div>
<div class="gl" style="left:1114.83px;width:80px;top:33.31px">Halogens</div>
<div class="rh" style="left:-0.8px;width:20px;top:69.81px">1</div>
<div class="rh" style="left:-0.8px;width:20px;top:140.38px">2</div>
<div class="rh" style="left:-0.8px;width:20px;top:210.95px">3</div>
<div class="rh" style="left:-0.8px;width:20px;top:281.52px">4</div>
<div class="rh" style="left:-0.8px;width:20px;top:352.09px">5</div>
<div class="rh" style="left:-0.8px;width:20px;top:422.67px">6</div>
<div class="rh" style="left:-0.8px;width:20px;top:493.24px">7</div>
<div class="rh" style="left:202px;width:20px;top:603.21px">6</div>
<div class="rh" style="left:202px;width:20px;top:673.78px">7</div>
<style>
.t{position:absolute;white-space:nowrap}
.lg{position:absolute;border:1px solid #3a3a3a;border-radius:6px}
.gap{position:absolute;background:#1b1b1b;height:4px}
.sw{position:absolute;left:316px;width:56.5px;height:27px;background:#3d3d3d;border:1px solid #6a6a6a;border-radius:4px}
.sw i{position:absolute;left:6.2px;top:6.7px;width:42.6px;height:10.3px;border:1px solid #787878}
.btn{position:absolute;top:72px;height:156px;width:157.5px;box-shadow:0 2px 3px rgba(0,0,0,.55);border:1px solid #303030;border-top-color:#262626;border-bottom:1.5px solid #474747}
</style>
<div class="t" style="left:93.00px;top:49.10px;font-size:15px;line-height:15px;letter-spacing:0px;color:#dcdcdc;transform:scaleX(1.05);transform-origin:0 0">Atomic</div>
<div class="t" style="left:92.50px;top:65.12px;font-size:21px;line-height:21px;letter-spacing:-0.3px;color:#dcdcdc">Symbol</div>
<div class="t" style="left:93.00px;top:85.99px;font-size:12.3px;line-height:12.3px;letter-spacing:0px;color:#dcdcdc;transform:scaleX(1.06);transform-origin:0 0">Name</div>
<div class="t" style="left:93.00px;top:97.24px;font-size:12px;line-height:12px;letter-spacing:0px;color:#dcdcdc;transform:scaleX(1.07);transform-origin:0 0">Weight</div>
<div class="lg" style="left:193.5px;top:58px;width:226px;height:183px"></div>
<div class="gap" style="left:208.5px;top:57px;width:61px"></div>
<div class="t" style="left:210.50px;top:46.53px;font-size:23px;line-height:23px;letter-spacing:0.07px;color:#e0e0e0">Color</div>
<div class="t" style="left:211.00px;top:79.57px;font-size:22.6px;line-height:22.6px;letter-spacing:0px;color:#e0e0e0;transform:scaleX(1.075);transform-origin:0 0">Minimum</div>
<div class="t" style="left:207.50px;top:160.67px;font-size:22.6px;line-height:22.6px;letter-spacing:0px;color:#e0e0e0;transform:scaleX(1.045);transform-origin:0 0">Maximum</div>
<div class="t" style="left:212.50px;top:202.67px;font-size:22.6px;line-height:22.6px;letter-spacing:0px;color:#7c7c7c;transform:scaleX(1.035);transform-origin:0 0">Unknown</div>
<div class="sw" style="top:75px"><i style="background:#001299"></i></div>
<div class="sw" style="top:155.5px"><i style="background:#857210"></i></div>
<div class="sw" style="top:197.5px"><i style="background:#3d3d3d"></i></div>
<div style="position:absolute;left:386px;top:73px;width:18.5px;height:108px;border:1px solid #5e5e5e;background:linear-gradient(#001299,#857210)"></div>
<div style="position:absolute;left:386px;top:195.5px;width:18.5px;height:31px;border:1px solid #5e5e5e;background:#333"></div>
<div class="lg" style="left:454.5px;top:58px;width:355px;height:183px"></div>
<div class="gap" style="left:469.5px;top:57px;width:59px"></div>
<div class="t" style="left:471.50px;top:48.38px;font-size:22px;line-height:22px;letter-spacing:-0.5px;color:#e0e0e0">Scale</div>
<div class="btn" style="left:469px;background:#1b1b1b"></div>
<div class="btn" style="left:638.5px;background:#3a3a3a;border-color:#434343;border-bottom-color:#4c4c4c"></div>
<svg style="position:absolute;left:0;top:0" width="1271" height="729"><g fill="none" stroke="#a8a8a8" stroke-width="3"><path d="M508.3 89.5V178M498 168.1H587.5M502.7 96L508.3 90.2L514 96M580.8 162.3L586.6 168.1L580.8 174M518.5 158L576.5 100"/><path d="M677.3 89.5V178M667 168.1H756.5M671.7 96L677.3 90.2L683 96M750.3 162.3L756.1 168.1L750.3 174M687 158.5C687 121 703 99.5 746.5 99.5"/></g></svg>
<div class="t" style="left:516.50px;top:188.70px;font-size:22.8px;line-height:22.8px;letter-spacing:-0.54px;color:#e6e6e6">Linear</div>
<div class="t" style="left:656.00px;top:188.80px;font-size:22.8px;line-height:22.8px;letter-spacing:0.26px;color:#e6e6e6">Logarithmic</div>
<div class="t" style="left:171.00px;top:425.97px;font-size:14.8px;line-height:14.8px;letter-spacing:-0.3px;color:#dcdcdc">57–71</div>
<div class="t" style="left:167.50px;top:495.77px;font-size:14.8px;line-height:14.8px;letter-spacing:-0.2px;color:#dcdcdc">89–103</div>
<div class="t" style="left:244.00px;top:551.75px;font-size:15.3px;line-height:15.3px;letter-spacing:0px;color:#dcdcdc;transform:scaleX(1.06);transform-origin:0 0">Electronegativity measures the tendency of an atom to attract a shared pair of electrons towards itself.</div>
</body></html>
